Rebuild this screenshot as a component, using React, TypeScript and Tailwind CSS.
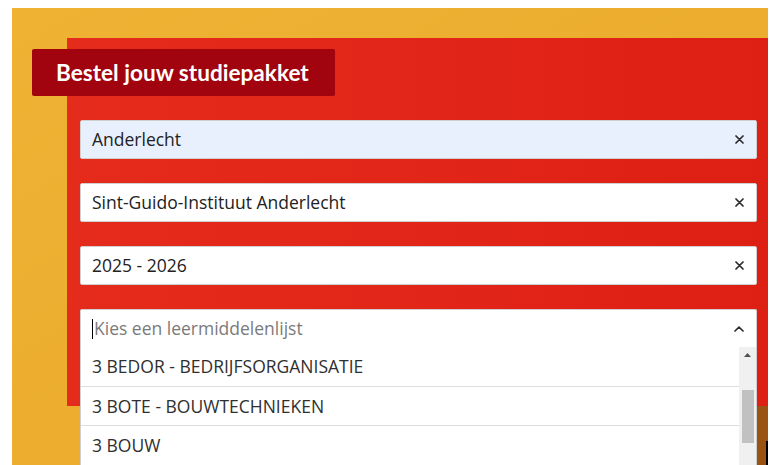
import React from 'react';

const fieldFont = { fontFamily: '"Open Sans", "Liberation Sans", sans-serif' };

const ClearIcon = () => (
  <svg width="9" height="9" viewBox="0 0 9 9" className="shrink-0">
    <path d="M1 1 L8 8 M8 1 L1 8" stroke="#2b2b2b" strokeWidth="1.7" strokeLinecap="round" />
  </svg>
);

const ChevronUp = () => (
  <svg width="10" height="6" viewBox="0 0 10 6" className="shrink-0">
    <path d="M1 5 L5 1.2 L9 5" stroke="#2b2b2b" strokeWidth="1.7" fill="none" strokeLinecap="round" />
  </svg>
);

interface FieldProps {
  value: string;
  autofill?: boolean;
}

const Field: React.FC<FieldProps> = ({ value, autofill }) => (
  <div
    className={`h-[39px] flex items-center justify-between pl-[11px] pr-[12px] border border-[#cfcfcf] rounded-[2px] text-[17.5px] text-[#222] ${autofill ? 'bg-[#e8f0fe]' : 'bg-white'}`}
    style={fieldFont}
  >
    <span>{value}</span>
    <ClearIcon />
  </div>
);

const options = [
  '3 BEDOR - BEDRIJFSORGANISATIE',
  '3 BOTE - BOUWTECHNIEKEN',
  '3 BOUW',
];

export default function App() {
  return (
    <div className="w-[778px] h-[465px] bg-white pt-[8px] pl-[12px] pr-[10px] overflow-hidden">
      <div className="relative h-[457px] flex flex-col bg-gradient-to-br from-[#efb233] to-[#eaa92b]">
        {/* red panel */}
        <div className="ml-[55px] mt-[30px] h-[368px] bg-gradient-to-r from-[#e52b1c] to-[#de1f13] pl-[13px] pr-[11px] pt-[82px] flex flex-col gap-[24px]">
          <Field value="Anderlecht" autofill />
          <Field value="Sint-Guido-Instituut Anderlecht" />
          <Field value="2025 - 2026" />

          {/* open select */}
          <div className="relative">
            <div
              className="h-[39px] flex items-center justify-between pl-[11px] pr-[12px] bg-white border border-[#cfcfcf] border-b-[#dcdcdc] rounded-t-[2px] text-[17.5px]"
              style={fieldFont}
            >
              <span className="flex items-center">
                <span className="w-px h-[20px] bg-black mr-[1px]" />
                <span className="text-[#7a7a7a]">Kies een leermiddelenlijst</span>
              </span>
              <ChevronUp />
            </div>

            {/* dropdown menu */}
            <div className="absolute left-0 right-0 top-[38px] h-[120px] bg-white border-x border-[#cfcfcf] flex z-10" style={fieldFont}>
              <div className="flex-1 flex flex-col">
                {options.map((o, i) => (
                  <div
                    key={o}
                    className={`h-[39px] shrink-0 flex items-center pl-[11px] text-[17.5px] text-[#2f2f2f] ${i > 0 ? 'border-t border-[#dedede]' : ''}`}
                  >
                    {o}
                  </div>
                ))}
              </div>
              <div className="w-[17px] bg-[#f0f0f0] flex flex-col items-center pt-[6px]">
                <svg width="7" height="4" viewBox="0 0 7 4">
                  <path d="M0 4 L3.5 0 L7 4 Z" fill="#505050" />
                </svg>
                <div className="mt-[33px] w-[12px] h-[53px] bg-[#c1c1c1]" />
              </div>
            </div>
          </div>
        </div>

        {/* lower strip */}
        <div className="flex-1 flex justify-end">
          <div className="w-[11px] bg-[#9a5313] relative">
            <div className="absolute right-0 top-[35px] bottom-0 w-[2px] bg-black" />
          </div>
        </div>

        {/* title badge */}
        <div className="absolute left-[20px] top-[41px] w-[303px] h-[47px] bg-[#a1040e] rounded-[2px] flex items-center pl-[24px]">
          <span
            className="text-white text-[22.6px] font-bold"
            style={{ fontFamily: 'Lato, "Open Sans", sans-serif' }}
          >
            Bestel jouw studiepakket
          </span>
        </div>
      </div>
    </div>
  );
}
